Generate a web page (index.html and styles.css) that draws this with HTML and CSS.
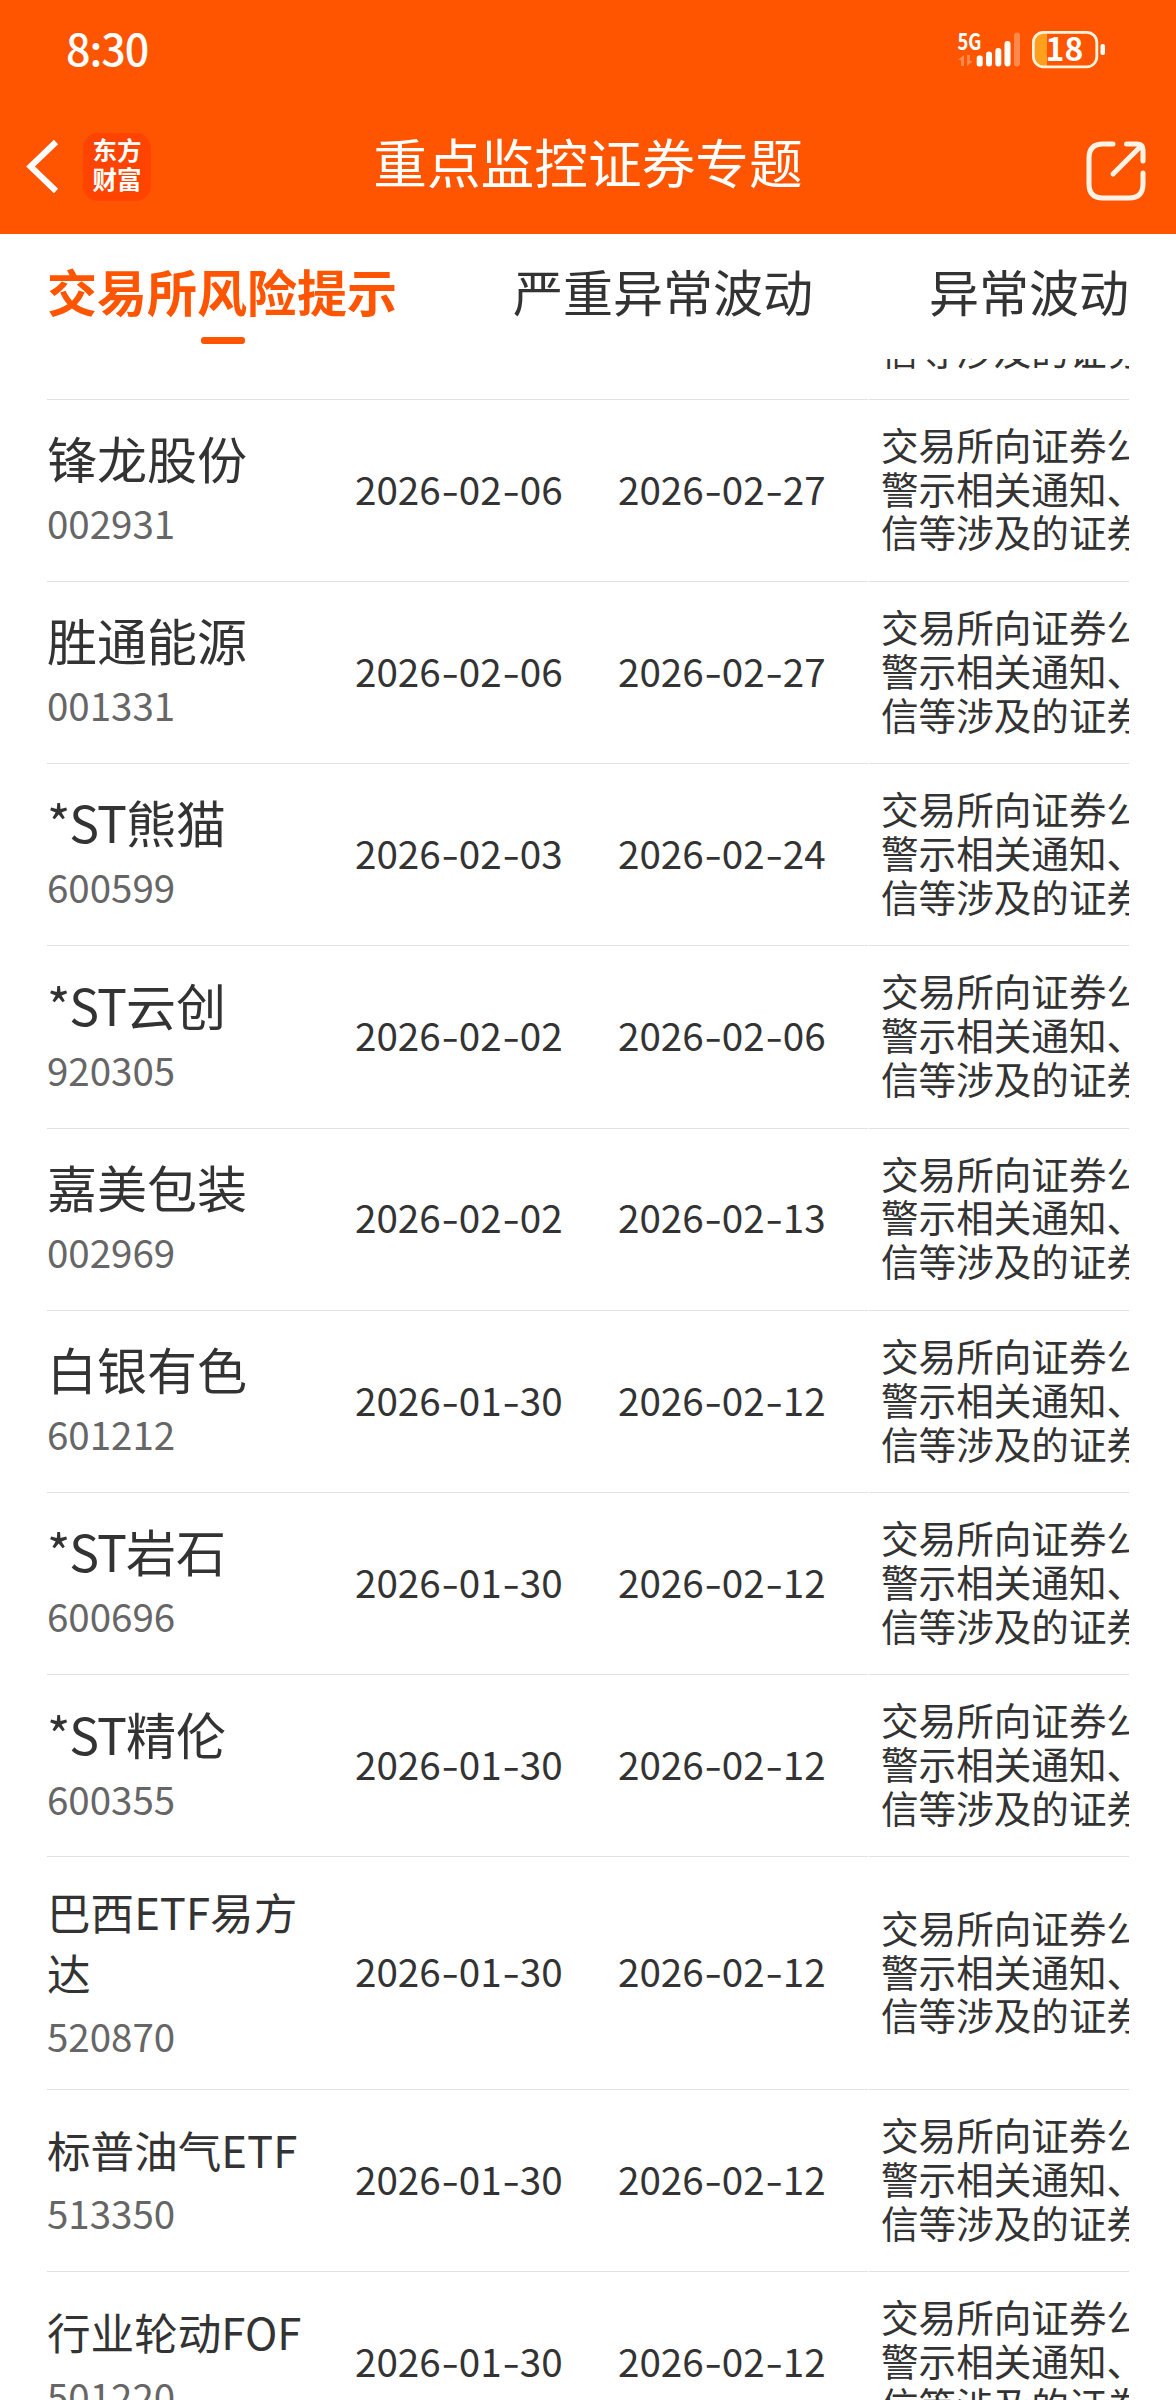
FILE: index.html
```
<!DOCTYPE html>
<html lang="zh-CN">
  <head>
    <meta charset="utf-8" />
    <title>重点监控证券专题</title>
    <meta name="viewport" content="width=device-width, initial-scale=1" />
    <link rel="stylesheet" href="styles.css">
  </head>

  <body>
    <header class="header">
      <div class="status-bar">
        <span class="time">8:30</span>
        <svg class="status-icons" width="150" height="40" viewBox="956 30 150 40">
          <text class="net" x="957.5" y="50" textLength="24" lengthAdjust="spacingAndGlyphs">5G</text>
          <g fill="#fff" opacity="0.3">
            <path d="M958 60l6-5v11h-3v-6zM973 61l-6 5v-11h3v6z" />
            <rect x="1014" y="32.5" width="6" height="34" rx="3" />
          </g>
          <g fill="#fff">
            <rect x="976.7" y="55.5" width="6" height="11" rx="2.5" />
            <rect x="986" y="51.5" width="6" height="15" rx="3" />
            <rect x="995.3" y="48" width="6" height="18.5" rx="3" />
            <rect x="1004.5" y="41" width="6" height="25.5" rx="3" />
            <rect x="1100.5" y="44" width="4.5" height="11" rx="2" />
          </g>
          <path fill="#ff9f1c" d="M1047 33v33h-5q-7 0-7-8v-17q0-8 7-8z" />
          <rect x="1033.4" y="32.4" width="63.4" height="34.4" rx="10" fill="none" stroke="#fff3dc" stroke-width="2.8" />
          <text class="battery" x="1064.5" y="61.3" text-anchor="middle">18</text>
        </svg>
      </div>
      <div class="nav">
        <svg class="back" width="34" height="58" viewBox="26 138 34 58">
          <path d="M56 142L30.5 166.5L56 191" />
        </svg>
        <div class="logo"><span>东方</span><span>财富</span></div>
        <h1 class="title">重点监控证券专题</h1>
        <svg class="share" width="62" height="62" viewBox="1085 140 62 62">
          <path d="M1113 144H1103Q1089 144 1089 158V184Q1089 198 1103 198H1129Q1143 198 1143 184V173M1126.500 144H1137Q1143 144 1143 150V161M1113 174L1141 146" />
        </svg>
      </div>
    </header>

    <nav class="tabs">
      <a class="tab active">交易所风险提示</a>
      <a class="tab">严重异常波动</a>
      <a class="tab">异常波动</a>
    </nav>

    <main class="list" id="list">
      <div class="row">
        <div class="main"></div>
        <div class="reason"><div>信等涉及的证券</div></div>
      </div>
    </main>

    <script>
      // name, code, start date, end date
      const rows = [
        ['锋龙股份', '002931', '2026-02-06', '2026-02-27'],
        ['胜通能源', '001331', '2026-02-06', '2026-02-27'],
        ['*ST熊猫', '600599', '2026-02-03', '2026-02-24'],
        ['*ST云创', '920305', '2026-02-02', '2026-02-06'],
        ['嘉美包装', '002969', '2026-02-02', '2026-02-13'],
        ['白银有色', '601212', '2026-01-30', '2026-02-12'],
        ['*ST岩石', '600696', '2026-01-30', '2026-02-12'],
        ['*ST精伦', '600355', '2026-01-30', '2026-02-12'],
        ['巴西ETF易方达', '520870', '2026-01-30', '2026-02-12'],
        ['标普油气ETF', '513350', '2026-01-30', '2026-02-12'],
        ['行业轮动FOF', '501220', '2026-01-30', '2026-02-12'],
      ];
      const reason = ['交易所向证券公', '警示相关通知、', '信等涉及的证券'];

      function formatDate(date) {
        return date.replace(/-/g, '<span class="dash">-</span>');
      }

      function formatName(name) {
        return name.replace('*ST', '<span class="st">*ST</span>');
      }

      document.getElementById('list').innerHTML += rows
        .map(function ([name, code, start, end]) {
          // long names use the smaller size
          const size = name.length > 5 ? ' small' : '';
          return `
            <div class="row">
              <div class="main">
                <div class="stock">
                  <div class="name${size}">${formatName(name)}</div>
                  <div class="code">${code}</div>
                </div>
                <div class="date">${formatDate(start)}</div>
                <div class="date">${formatDate(end)}</div>
              </div>
              <div class="reason"><div>${reason.join('<br>')}</div></div>
            </div>`;
        })
        .join('');
    </script>
  </body>
</html>
```
FILE: styles.css
```
/* Layout and font */

* {
  box-sizing: border-box;
}

html,
body {
  margin: 0;
  height: 2400px;
  overflow: hidden;
}

body {
  display: flex;
  flex-direction: column;
  background: #fff;
  color: #333;
  font-family: "Noto Sans CJK SC", sans-serif;
}

/* Header */

.header {
  flex: none;
  height: 234px;
  background: #ff5500;
  color: #fff;
}

.status-bar {
  display: flex;
  justify-content: space-between;
  align-items: center;
  height: 100px;
  padding: 0 70px 0 66px;
}

.time {
  margin-bottom: 6px;
  font-size: 43px;
  font-weight: 500;
  letter-spacing: -1px;
  line-height: 60px;
}

.status-icons {
  overflow: visible;
}

.net {
  fill: #fff;
  font-size: 23px;
  font-weight: 700;
}

.battery {
  fill: #fff;
  font-size: 32px;
  font-weight: 700;
}

.nav {
  display: flex;
  align-items: center;
  height: 134px;
  padding: 0 29px 0 26px;
}

.back {
  fill: none;
  stroke: #fff;
  stroke-width: 6;
}

.logo {
  display: flex;
  flex-direction: column;
  align-items: center;
  justify-content: center;
  width: 68px;
  height: 68px;
  margin-left: 23px;
  padding-bottom: 6px;
  border-radius: 15px;
  background: #ff4300;
  font-size: 24.5px;
  font-weight: 700;
  line-height: 29px;
}

.title {
  flex: 1;
  margin: 0 0 12px 67px;
  padding-right: 127px;
  text-align: center;
  font-size: 53.7px;
  font-weight: 400;
  line-height: 80px;
}

.share {
  margin-top: 8px;
  fill: none;
  stroke: #fff3e6;
  stroke-width: 5;
  stroke-linecap: round;
}

/* Tabs */

.tabs {
  flex: none;
  display: flex;
  justify-content: space-between;
  height: 125px;
  padding: 16px 47px 0;
}

.tab {
  display: flex;
  flex-direction: column;
  align-items: center;
  font-size: 50px;
  line-height: 80px;
}

.tab.active {
  color: #ff5500;
  font-weight: 700;
}

.tab.active:after {
  content: '';
  width: 44px;
  height: 7px;
  margin: 7px 0 0 2px;
  border-radius: 3px;
  background: #ff5500;
}

/* List, scrolled part way through the first row */

.list {
  flex: 1;
  min-height: 0;
  margin: 0 47px;
  overflow: hidden;
}

.row {
  display: grid;
  grid-template-columns: 821px 260px;
  column-gap: 1px;
}

.row:first-child {
  margin-top: -53.8px;
}

.main,
.reason {
  padding: 22px 0 27.7px;
  border-bottom: 1px solid #e2e2e2;
}

.main {
  display: grid;
  grid-template-columns: 308px 263px 250px;
  align-items: center;
}

.stock {
  width: 270px;
}

.name {
  font-size: 50px;
  line-height: 61px;
}

.name.small {
  margin-bottom: -1.5px;
  padding-top: 1.5px;
  font-size: 43.6px;
}

.st {
  letter-spacing: -1px;
}

.code {
  margin-top: 8px;
  color: #666;
  font-size: 38.5px;
  line-height: 52px;
}

.date {
  font-size: 38.6px;
  line-height: 52px;
  white-space: nowrap;
}

.dash {
  display: inline-block;
  width: 18.2px;
  text-align: center;
  transform: scaleX(1.3);
}

.reason {
  display: flex;
  align-items: center;
  padding-left: 12px;
  overflow: hidden;
  font-size: 37.6px;
  line-height: 43.84px;
  white-space: nowrap;
}
```
